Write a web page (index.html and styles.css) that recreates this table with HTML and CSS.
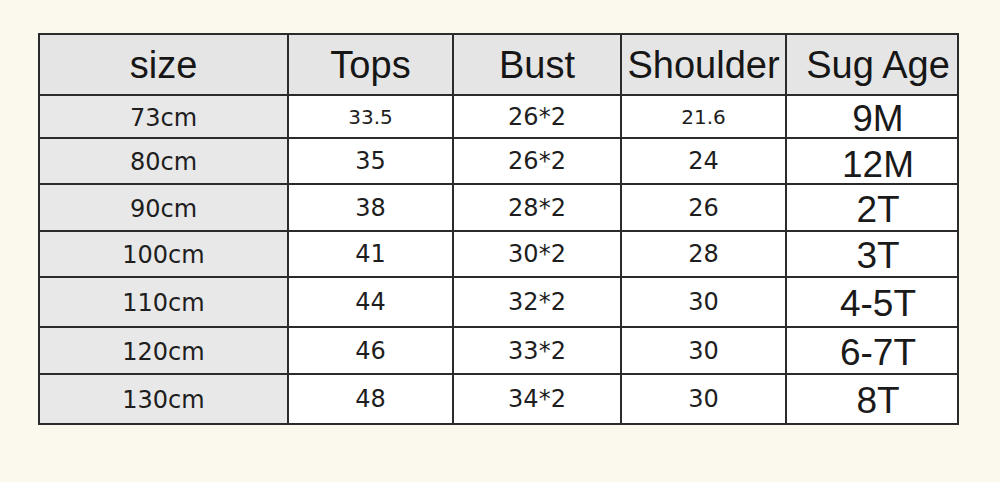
FILE: index.html
```html
<!DOCTYPE html>
<html lang="en">
<head>
<meta charset="utf-8">
<title>Size chart</title>
<link rel="stylesheet" href="styles.css">
</head>
<body>
<main class="page">
  <table class="chart">
    <colgroup>
      <col class="c-size">
      <col class="c-tops">
      <col class="c-bust">
      <col class="c-shoulder">
      <col class="c-age">
    </colgroup>
    <thead>
      <tr class="head">
        <th>size</th>
        <th>Tops</th>
        <th>Bust</th>
        <th>Shoulder</th>
        <th class="age-h">Sug Age</th>
      </tr>
    </thead>
    <tbody>
      <tr class="r1"><td class="size">73cm</td><td class="small">33.5</td><td>26*2</td><td class="small">21.6</td><td class="age">9M</td></tr>
      <tr class="r2"><td class="size">80cm</td><td>35</td><td>26*2</td><td>24</td><td class="age low">12M</td></tr>
      <tr class="r3"><td class="size">90cm</td><td>38</td><td>28*2</td><td>26</td><td class="age">2T</td></tr>
      <tr class="r4"><td class="size">100cm</td><td>41</td><td>30*2</td><td>28</td><td class="age">3T</td></tr>
      <tr class="r5"><td class="size">110cm</td><td>44</td><td>32*2</td><td>30</td><td class="age">4-5T</td></tr>
      <tr class="r6"><td class="size">120cm</td><td>46</td><td>33*2</td><td>30</td><td class="age">6-7T</td></tr>
      <tr class="r7"><td class="size">130cm</td><td>48</td><td>34*2</td><td>30</td><td class="age">8T</td></tr>
    </tbody>
  </table>
</main>
</body>
</html>
```

FILE: styles.css
```css
html, body {
  margin: 0;
  padding: 0;
  background: #fbf9ee;
}

.page {
  padding: 33px 0 0 38px;
}

.chart {
  border-collapse: collapse;
  table-layout: fixed;
  width: 919px;
  background: #ffffff;
}

.c-size { width: 249px; }
.c-tops { width: 165px; }
.c-bust { width: 168px; }
.c-shoulder { width: 165px; }
.c-age { width: 172px; }

.chart th,
.chart td {
  border: 2px solid #2b2b2b;
  padding: 0;
  text-align: center;
  vertical-align: middle;
  line-height: 1;
  white-space: nowrap;
}

.chart th {
  background: #e5e5e5;
  font-family: "Liberation Sans", Arial, sans-serif;
  font-weight: normal;
  font-size: 38px;
  color: #161616;
}

.chart th.age-h {
  padding-left: 12px;
}

.chart td {
  font-family: "DejaVu Sans", Verdana, sans-serif;
  font-size: 24px;
  color: #1e1e1e;
}

.chart td.size {
  background: #e8e8e8;
  font-size: 24px;
  padding-top: 2px;
}

.chart td.small {
  font-size: 20px;
}

.chart td.age {
  font-family: "Liberation Sans", Arial, sans-serif;
  font-size: 37px;
  color: #1a1a1a;
  padding-left: 12px;
  padding-top: 3px;
}

.chart td.age.low {
  padding-top: 7px;
}

.head { height: 61px; }
.r1 { height: 43px; }
.r2 { height: 46px; }
.r3 { height: 47px; }
.r4 { height: 46px; }
.r5 { height: 50px; }
.r6 { height: 47px; }
.r7 { height: 50px; }
```
